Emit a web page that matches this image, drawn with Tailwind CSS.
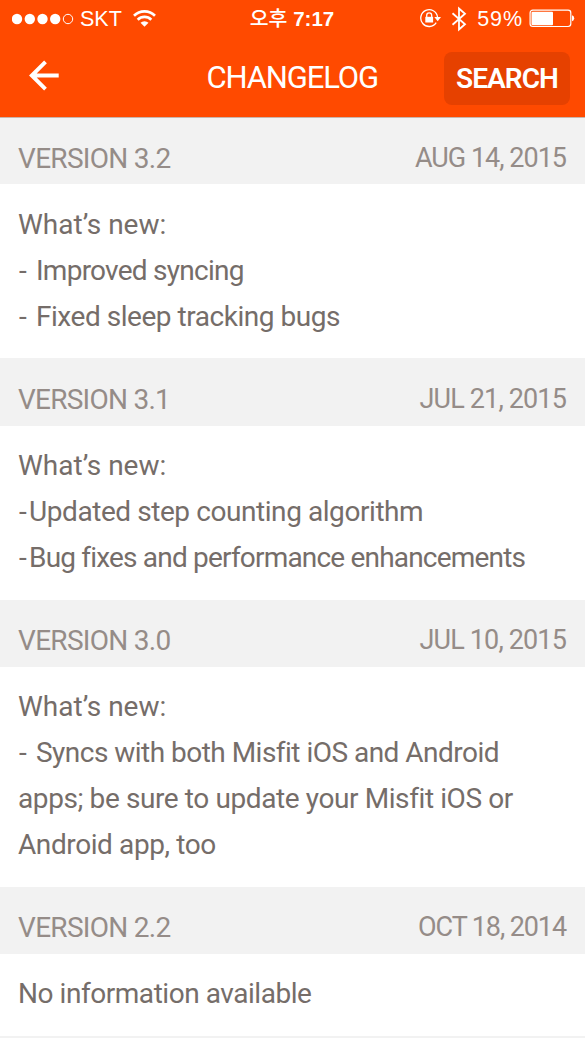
<!DOCTYPE html>
<html lang="en">
<head>
<meta charset="utf-8">
<title>Changelog</title>
<script src="https://cdn.jsdelivr.net/npm/@tailwindcss/browser@4"></script>
</head>
<body class="w-[585px] h-[1038px] overflow-hidden bg-white font-['Roboto',sans-serif] text-[#756d69]">
<header class="h-[118px] bg-[#ff4a00] text-white border-b border-[#c9b5ac]">
  <div class="grid grid-cols-3 items-center h-[37px] pl-[12px] pr-[10px] font-['Liberation_Sans','Noto_Sans_CJK_KR',sans-serif]">
    <div class="flex items-center">
      <svg class="w-[62px] h-[12px]" viewBox="0 0 62 12" fill="#fff"><circle cx="5" cy="6" r="5.2"/><circle cx="17.8" cy="6" r="5.2"/><circle cx="30.5" cy="6" r="5.2"/><circle cx="43.2" cy="6" r="5.2"/><circle cx="56" cy="6" r="4.7" fill="none" stroke="#fff"/></svg>
      <span class="ml-[6px] text-[21.5px] leading-[36px] whitespace-nowrap">SKT</span>
      <svg class="ml-[11px] w-[23px] h-[18px]" viewBox="0 0 23 18" fill="none" stroke="#fff" stroke-width="2.7"><path d="M1 5.7A15 15 0 0 1 22 5.7M4.7 9.7A9.8 9.8 0 0 1 18.3 9.7"/><path d="M7.5 12.8A5.8 5.8 0 0 1 15.5 12.8L11.5 16.8Z" fill="#fff" stroke="none"/></svg>
    </div>
    <div class="-ml-[3px] text-center text-[20.5px] leading-[36px] font-medium whitespace-nowrap"><span>오후</span> <span class="font-bold">7:17</span></div>
    <div class="flex items-center justify-end">
      <svg class="w-[23px] h-[20px] -mt-[1px]" viewBox="0 0 23 20" fill="none" stroke="#fff" stroke-width="1.3"><path d="M17.2 14.7A8.4 8.4 0 1 1 18.5 9"/><path d="M15.3 9H22L18.7 13.2Z" fill="#fff" stroke="none"/><path d="M7.7 9V7.4A2.5 2.5 0 0 1 12.7 7.4V9"/><rect x="6.3" y="8.8" width="7.8" height="5.7" fill="#fff" stroke="none"/></svg>
      <svg class="ml-[9px] w-[16px] h-[26px]" viewBox="0 0 16 26" fill="none" stroke="#fff" stroke-width="1.8"><path d="M1.5 7.2L14 18.2L8 23.5V2.5L14 7.8L1.5 18.8"/></svg>
      <span class="ml-[10px] text-[21.5px] leading-[36px] tracking-[0.9px] whitespace-nowrap">59%</span>
      <svg class="ml-[6px] w-[46px] h-[19px]" viewBox="0 0 46 19" fill="none"><rect x="1.1" y="1.2" width="40.7" height="16.3" rx="2.7" stroke="#fff" stroke-width="1.2"/><rect x="2.5" y="2.7" width="21.5" height="13.5" rx="1" fill="#fff"/><path d="M43 6.3Q45.2 7 45.2 9.3T43 12.3Z" fill="#fff"/></svg>
    </div>
  </div>
  <div class="flex items-center justify-between h-[81px] pl-[29px] pr-[15px] pt-[1px]">
    <svg class="w-[31px] h-[31px] shrink-0 -mt-[6px]" viewBox="0 0 31 31" fill="none" stroke="#fff" stroke-width="3.9"><path d="M16.5 1.8L2.8 15.5L16.5 29.2M2.8 15.5H29.7"/></svg>
    <h1 class="ml-[109px] w-[200px] text-[31px] leading-[40px] tracking-[-1.15px] whitespace-nowrap">CHANGELOG</h1>
    <button class="w-[126px] h-[53px] rounded-[8px] bg-[#e64100] text-[28px] font-semibold tracking-[-0.9px] pt-px text-center">SEARCH</button>
  </div>
</header>
<main class="text-[28px]">
  <section>
    <div class="flex justify-between h-[66px] pl-[18px] pr-[19px] bg-[#f2f2f2] text-[#958c88] whitespace-nowrap"><h2 class="leading-[81px] tracking-[-0.7px]">VERSION 3.2</h2><time class="text-[27px] leading-[80px] tracking-[-1px]">AUG 14, 2015</time></div>
    <div class="h-[174px] pt-[18px] pl-[18px] leading-[45.8px] whitespace-nowrap"><p>What’s new:</p><p class="flex tracking-[-0.75px]"><span class="w-[18px] pl-px">-</span>Improved syncing</p><p class="flex tracking-[-0.46px]"><span class="w-[18px] pl-px">-</span>Fixed sleep tracking bugs</p></div>
  </section>
  <section>
    <div class="flex justify-between h-[68px] pl-[18px] pr-[19px] bg-[#f2f2f2] text-[#958c88] whitespace-nowrap"><h2 class="leading-[83px] tracking-[-0.75px]">VERSION 3.1</h2><time class="text-[27px] leading-[82px] tracking-[-0.85px]">JUL 21, 2015</time></div>
    <div class="h-[174px] pt-[17.2px] pl-[18px] leading-[45.8px] whitespace-nowrap"><p>What’s new:</p><p class="flex tracking-[-0.43px]"><span class="w-[11px] pl-px">-</span>Updated step counting algorithm</p><p class="flex tracking-[-0.81px]"><span class="w-[11px] pl-px">-</span>Bug fixes and performance enhancements</p></div>
  </section>
  <section>
    <div class="flex justify-between h-[67px] pl-[18px] pr-[19px] bg-[#f2f2f2] text-[#958c88] whitespace-nowrap"><h2 class="leading-[82px] tracking-[-0.7px]">VERSION 3.0</h2><time class="text-[27px] leading-[80px] tracking-[-0.85px]">JUL 10, 2015</time></div>
    <div class="h-[220px] pt-[17.2px] pl-[18px] leading-[45.8px] whitespace-nowrap"><p>What’s new:</p><p class="flex tracking-[-0.52px]"><span class="w-[18px] pl-px">-</span>Syncs with both Misfit iOS and Android</p><p class="tracking-[-0.4px]">apps; be sure to update your Misfit iOS or</p><p class="tracking-[-0.4px]">Android app, too</p></div>
  </section>
  <section>
    <div class="flex justify-between h-[67px] pl-[18px] pr-[19px] bg-[#f2f2f2] text-[#958c88] whitespace-nowrap"><h2 class="leading-[82px] tracking-[-0.7px]">VERSION 2.2</h2><time class="text-[27px] leading-[80px] tracking-[-1.1px]">OCT 18, 2014</time></div>
    <div class="h-[82px] pt-[17.2px] pl-[18px] leading-[45.8px] whitespace-nowrap"><p class="tracking-[-0.45px]">No information available</p></div>
  </section>
  <div class="h-[2px] bg-[#f2f2f2]"></div>
</main>
</body>
</html>
